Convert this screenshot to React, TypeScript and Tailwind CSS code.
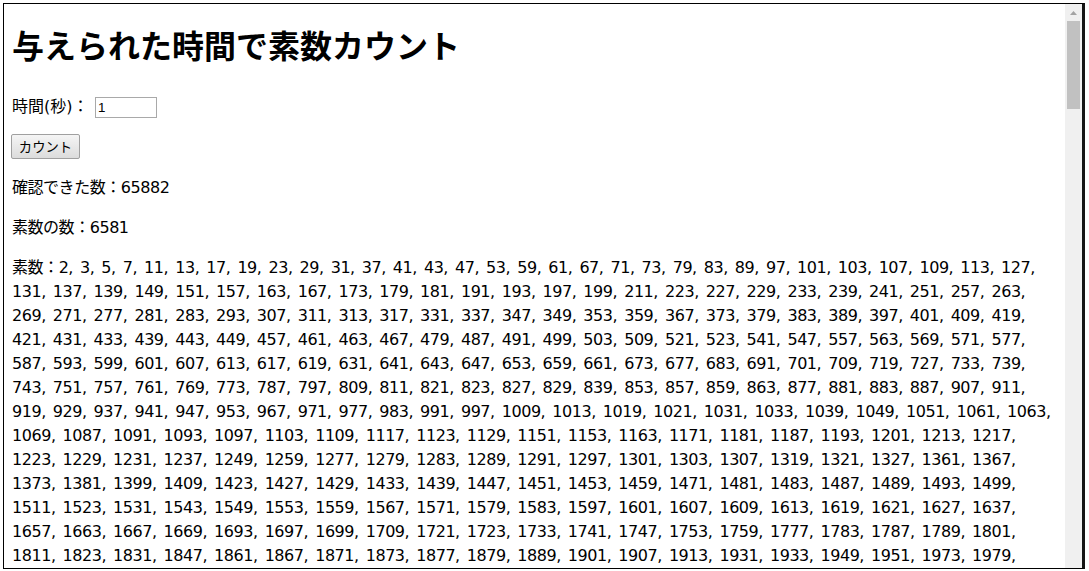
import React from "react";

function primesUpTo(n: number): number[] {
  const sieve: boolean[] = new Array(n + 1).fill(true);
  sieve[0] = false;
  sieve[1] = false;
  for (let i = 2; i * i <= n; i++) {
    if (sieve[i]) for (let j = i * i; j <= n; j += i) sieve[j] = false;
  }
  const out: number[] = [];
  for (let i = 2; i <= n; i++) if (sieve[i]) out.push(i);
  return out;
}

const starts = [2, 131, 269, 421, 587, 743, 919, 1069, 1223, 1373, 1511, 1657, 1811, 1987];

function buildLines(): string[] {
  const primes = primesUpTo(2600);
  const lines: string[] = [];
  for (let i = 0; i < starts.length - 1; i++) {
    const nums = primes.filter((p) => p >= starts[i] && p < starts[i + 1]);
    lines.push(nums.join(", ") + ",");
  }
  const rest = primes.filter((p) => p >= starts[starts.length - 1]);
  for (let i = 0; i < rest.length; i += 20) {
    lines.push(rest.slice(i, i + 20).join(", ") + ",");
  }
  return lines;
}

const lines = buildLines();

export default function App() {
  return (
    <div className="w-[1089px] h-[571px] bg-white pt-[3px] pl-[3px] overflow-hidden">
      <div className="w-[1082px] h-[566px] flex border-l border-t border-b border-black border-r-[3px] border-r-[#141414]">
        <div className="flex-1 overflow-hidden pl-[8px] text-black text-[16px] [font-family:'DejaVu_Sans','Noto_Sans_CJK_JP',sans-serif]">
          <h1 className="mt-[16px] h-[48px] leading-[48px] text-[32px] font-bold whitespace-nowrap [font-family:'Noto_Sans_CJK_JP',sans-serif]">
            与えられた時間で素数カウント
          </h1>
          <div className="mt-[27px] h-[24px] flex items-center whitespace-nowrap">
            <span className="inline-block w-[83px] leading-[24px]">時間(秒)：</span>
            <input
              defaultValue="1"
              className="w-[62px] h-[21px] border border-[#a9a9a9] bg-white px-[2px] text-[13.33px] leading-[19px] text-black outline-none [font-family:'Liberation_Sans',Arial,sans-serif]"
            />
          </div>
          <div className="mt-[15px] h-[25px] flex ml-[-1px]">
            <button className="w-[69px] h-[25px] border border-[#a0a0a0] rounded-[2px] bg-gradient-to-b from-[#f5f5f5] to-[#dcdcdc] text-[13.33px] leading-[23px] text-black [font-family:'Noto_Sans_CJK_JP',sans-serif]">
              カウント
            </button>
          </div>
          <div className="tracking-[-0.46px] [word-spacing:2.4px]">
            <p className="mt-[17px] leading-[24px] whitespace-nowrap">確認できた数：65882</p>
            <p className="mt-[16px] leading-[24px] whitespace-nowrap">素数の数：6581</p>
            <div className="mt-[16px] leading-[24px]">
              {lines.map((line, i) => (
                <div key={i} className="h-[24px] whitespace-nowrap">
                  {i === 0 ? "素数：" : ""}
                  {line}
                </div>
              ))}
            </div>
          </div>
        </div>
        <div className="w-[17px] shrink-0 bg-[#f0f0f0] flex flex-col items-center">
          <div className="h-[17px] w-[17px] flex items-center justify-center">
            <svg width="7" height="4" viewBox="0 0 7 4">
              <polygon points="3.5,0 7,4 0,4" fill="#a3a3a3" />
            </svg>
          </div>
          <div className="w-[13px] h-[88px] bg-[#c1c1c1]" />
        </div>
      </div>
    </div>
  );
}
